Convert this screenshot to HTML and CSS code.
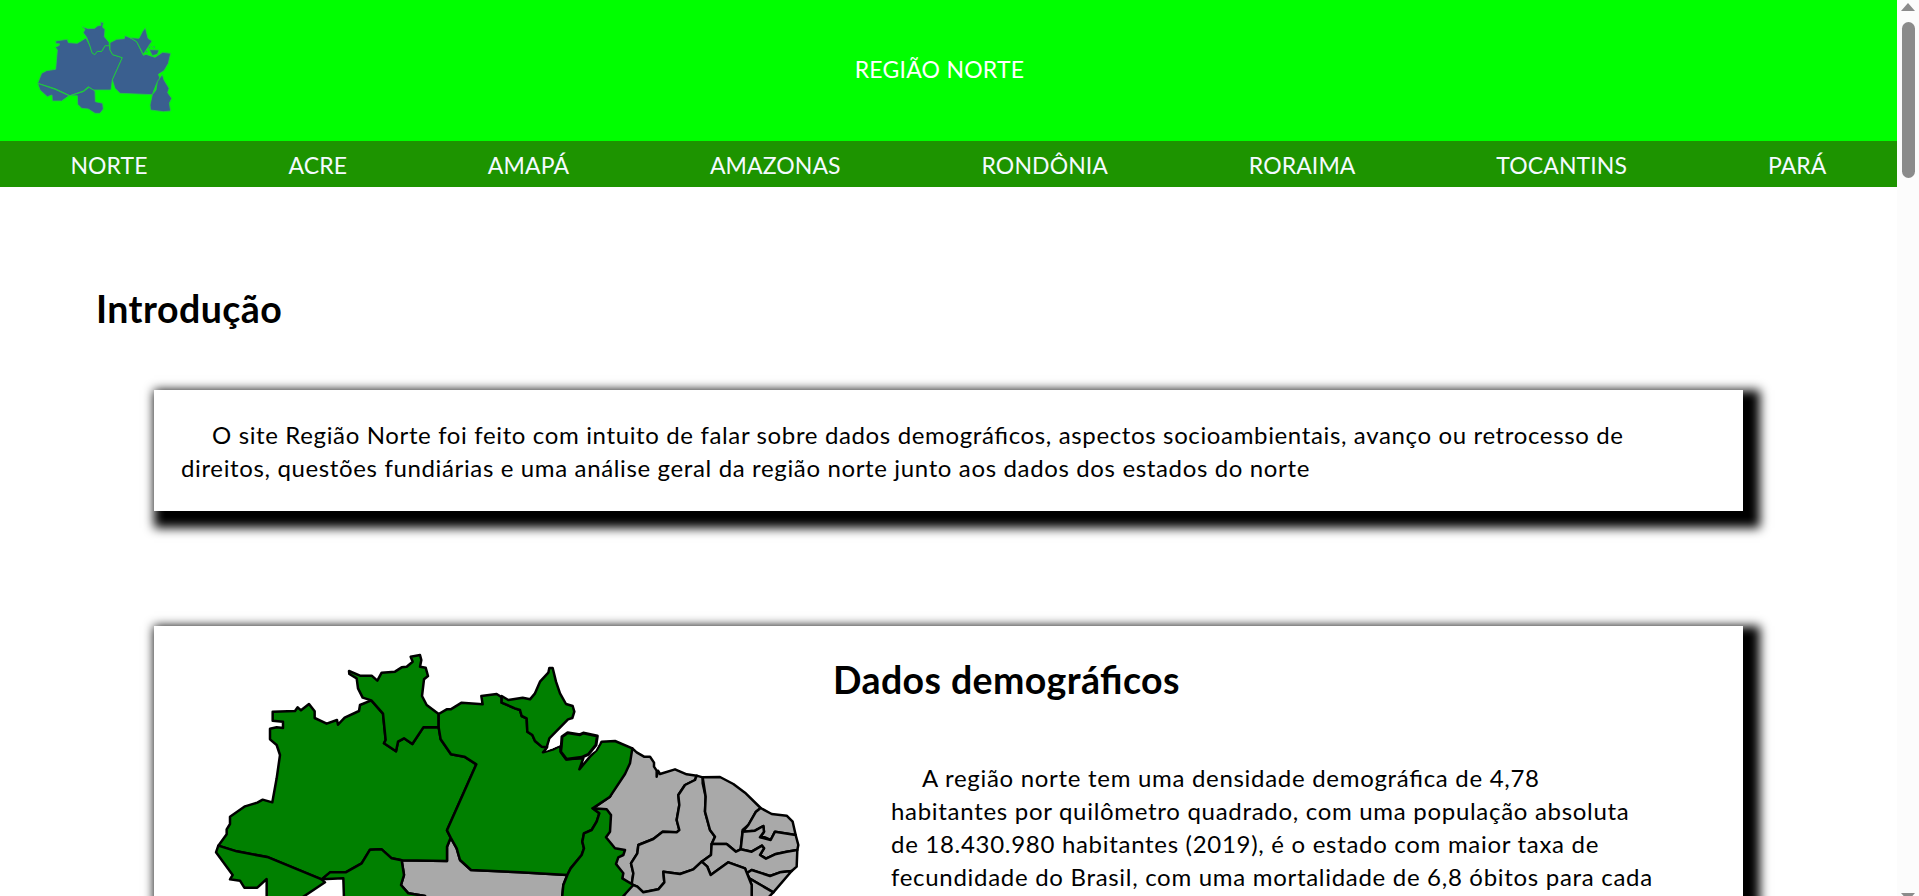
FILE: index.html
```html
<!DOCTYPE html>
<html lang="pt-BR">
<head>
<meta charset="utf-8">
<title>Região Norte</title>
<link rel="stylesheet" href="styles.css">
</head>
<body>
<div class="page">
  <header class="header">
    <svg class="logo" viewBox="0 0 510 360" aria-label="Mapa da Região Norte">
      <path d="M107 93 142 88 145 98 172 100 198 84 210 108 216 128 224 134 232 124 245 124 255 107 268 107 270 120 278 134 307 143 277 210 273 240 220 240 205 230 190 243 150 257 105 236 53 220 65 190 80 182 107 178 112 120 106 112 118 106 118 101 108 101Z"/>
      <path d="M200 82 190 68 195 58 186 50 205 56 225 55 232 48 243 46 242 36 250 38 248 52 255 58 253 80 267 97 268 107 255 107 245 124 232 124 224 134 216 128 210 108Z"/>
      <path d="M270 98 290 88 313 86 315 77 330 83 350 95 370 136 378 133 405 142 428 127 452 130 445 160 432 182 415 193 420 205 408 225 397 254 300 250 285 235 277 210 307 143 278 134 270 120Z"/>
      <path d="M330 83 357 85 368 64 376 53 384 85 396 93 370 133 350 95Z"/>
      <path d="M388 119 417 120 412 133 397 137Z"/>
      <path d="M384 113 391 109 389 116ZM397 110 404 109 404 115ZM375 125 383 122 382 129Z"/>
      <path d="M427 193 432 210 447 235 443 248 455 265 448 280 452 303 430 305 392 300 390 285 397 254 408 240 412 215Z"/>
      <path d="M53 220 105 238 147 257 125 273 97 273 96 255 82 260 60 240Z"/>
      <path d="M150 257 190 245 207 232 225 243 226 275 248 280 250 297 240 310 225 310 205 297 185 295 173 283 172 257Z"/>
    </svg>
    <p class="site-name">REGIÃO NORTE</p>
  </header>
  <nav class="nav">
    <a>NORTE</a><a>ACRE</a><a>AMAPÁ</a><a>AMAZONAS</a><a>RONDÔNIA</a><a>RORAIMA</a><a>TOCANTINS</a><a>PARÁ</a>
  </nav>
  <main class="main">
    <h1 class="title">Introdução</h1>
    <section class="card intro">
      <p class="text">O site Região Norte foi feito com intuito de falar sobre dados demográficos, aspectos socioambientais, avanço ou retrocesso de<br>direitos, questões fundiárias e uma análise geral da região norte junto aos dados dos estados do norte</p>
    </section>
    <section class="card data">
      <svg class="map" viewBox="0 0 1800 840" aria-label="Mapa do Brasil">
        <g class="other">
          <path d="M605 661 741 663 741 620 752 593 770 625 780 660 813 690 960 697 1102 705 1090 735 1080 840 700 840 675 768 625 760 603 735 612 705Z"/>
          <path d="M1297 325 1310 337 1332 350 1350 350 1362 368 1362 380 1370 392 1370 410 1374 392 1380 402 1425 388 1460 403 1490 407 1485 420 1455 435 1435 465 1438 495 1430 540 1438 570 1430 577 1388 575 1360 597 1315 615 1312 640 1293 670 1300 700 1295 733 1270 720 1248 672 1180 505 1230 470Z"/>
          <path d="M1490 407 1508 412 1508 430 1517 470 1515 515 1530 570 1545 590 1535 612 1533 645 1505 665 1480 688 1440 702 1390 695 1393 727 1375 748 1330 757 1312 740 1295 733 1300 700 1293 670 1312 640 1315 615 1360 597 1388 575 1430 577 1438 570 1430 540 1438 495 1435 465 1455 435 1485 420Z"/>
          <path d="M1508 412 1560 411 1600 432 1635 458 1682 504 1668 515 1645 555 1628 570 1622 628 1608 635 1580 612 1535 612 1545 590 1530 570 1515 515 1517 470Z"/>
          <path d="M1682 504 1715 522 1760 527 1778 545 1787 585 1725 575 1712 600 1695 592 1680 592 1692 575 1690 558 1665 572 1628 575 1645 555 1668 515Z"/>
          <path d="M1787 585 1795 615 1792 630 1760 635 1725 643 1698 656 1680 645 1692 625 1686 617 1655 635 1622 628 1628 575 1665 572 1690 558 1692 575 1680 592 1712 600 1725 575Z"/>
          <path d="M1792 630 1790 680 1775 693 1740 697 1710 708 1655 690 1640 700 1635 685 1585 667 1532 705 1522 680 1505 665 1533 645 1535 612 1580 612 1608 635 1622 628 1655 635 1686 617 1692 625 1680 645 1698 656 1725 643 1760 635Z"/>
          <path d="M1775 693 1720 757 1648 715 1640 700 1655 690 1710 708 1740 697Z"/>
          <path d="M1720 757 1640 840 1655 768 1655 735 1640 700 1648 715Z"/>
          <path d="M1295 733 1312 740 1330 757 1375 748 1393 727 1390 695 1440 702 1480 688 1505 665 1522 680 1532 705 1585 667 1635 685 1655 735 1655 768 1650 840 1220 840Z"/>
        </g>
        <g class="north">
          <path d="M218 215 285 213 293 202 303 211 327 192 344 214 344 234 380 251 411 240 414 254 434 233 477 213 480 195 514 181 549 221 557 300 552 310 588 334 594 305 612 295 637 312 670 262 716 262 722 298 753 343 793 350 829 373 741 571 752 593 741 620 741 663 605 661 575 655 545 628 510 629 485 670 437 697 390 697 365 718 205 652 110 634 55 617 80 583 80 568 90 552 90 530 135 499 172 488 188 479 217 487 230 415 240 345 230 315 210 298 210 266 230 262 249 264 249 245 218 242Z"/>
          <path d="M514 181 488 173 474 145 470 115 448 102 447 93 480 107 515 107 532 122 545 98 585 95 605 82 620 80 638 65 632 50 660 45 664 60 660 80 677 83 684 108 672 118 666 168 680 195 716 222 716 262 670 262 637 312 612 295 594 305 588 334 552 310 557 300 549 221Z"/>
          <path d="M716 222 740 208 752 208 785 188 848 193 844 168 890 162 905 172 905 188 945 205 960 210 965 228 980 235 982 275 997 285 1005 303 1025 320 1042 322 1029 337 1060 328 1080 318 1084 338 1098 358 1150 355 1138 388 1170 350 1190 330 1205 305 1245 303 1297 325 1290 370 1275 402 1230 470 1178 505 1198 520 1190 545 1175 570 1152 580 1147 605 1152 625 1145 645 1112 685 1102 705 960 697 813 690 780 660 770 625 752 593 741 571 829 373 793 350 753 343 722 298 716 262Z"/>
          <path d="M905 168 925 180 968 173 990 178 1005 160 1020 125 1045 98 1048 84 1058 84 1068 125 1080 160 1098 192 1118 198 1123 215 1117 234 1104 238 1048 295 1040 322 1025 320 1005 303 997 285 982 275 980 235 965 228 960 210 945 205 905 188Z"/>
          <path class="channel" d="M1046 322 1052 299 1082 280 1080 316 1038 333ZM1155 352 1190 312 1200 307 1186 332Z"/>
          <path class="island" d="M1086 290 1103 278 1140 284 1150 279 1192 288 1188 315 1165 343 1145 352 1100 358 1082 335 1084 318Z"/>
          <path d="M1178 505 1220 508 1233 525 1230 575 1218 592 1245 625 1275 630 1270 645 1255 652 1248 672 1270 700 1267 715 1300 735 1270 768 1230 840 1080 840 1090 735 1102 705 1112 685 1145 645 1152 625 1147 605 1152 580 1175 570 1190 545 1198 520Z"/>
          <path d="M55 617 48 637 98 705 90 718 120 722 133 743 172 743 200 717 200 810 250 810 375 727 365 718 205 652 110 634Z"/>
          <path d="M365 718 430 715 434 840 700 840 675 768 625 760 603 735 612 705 605 661 575 655 545 628 510 629 485 670 437 697 390 697Z"/>
        </g>
      </svg>
      <div class="article">
        <h2 class="subtitle">Dados demográficos</h2>
        <p class="text">A região norte tem uma densidade demográfica de 4,78<br>habitantes por quilômetro quadrado, com uma população absoluta<br>de 18.430.980 habitantes (2019), é o estado com maior taxa de<br>fecundidade do Brasil, com uma mortalidade de 6,8 óbitos para cada</p>
      </div>
    </section>
  </main>
</div>
<div class="scrollbar"><i class="arrow up"></i><i class="thumb"></i><i class="arrow down"></i></div>
</body>
</html>
```
FILE: styles.css
```css
* { box-sizing: border-box; margin: 0; padding: 0; }
body {
  display: flex;
  height: 896px;
  overflow: hidden;
  background: #fff;
  color: #000;
  font-family: Lato, sans-serif;
  font-feature-settings: "liga" 1;
}
.page { width: 1897px; height: 896px; overflow: hidden; }
.header {
  display: grid;
  grid-template-columns: 170px 1fr 188px;
  align-items: center;
  height: 141px;
  padding: 0 20px 1px;
  background: #00ff00;
}
.logo { width: 170px; height: 120px; fill: #3a5f8f; stroke: #1fd03a; stroke-width: 2.5; stroke-linejoin: round; }
.site-name { padding-bottom: 2px; text-align: center; color: #fff; font-size: 23px; letter-spacing: 0.25px; }
.nav {
  display: flex;
  justify-content: space-around;
  align-items: center;
  height: 46px;
  padding-top: 1px;
  background: #1d9400;
  color: #f4fbff;
  font-size: 23px;
  letter-spacing: 0.1px;
}
.main { padding: 0 154px; }
.title { margin: 100px 0 0 -58px; font-size: 37.5px; line-height: 44px; letter-spacing: 0.45px; }
.card { background: #fff; box-shadow: 8.5px 8.5px 10px 8.5px #000; }
.intro { height: 121px; margin-top: 59px; padding: 28px 27px 0; }
.text { font-size: 24px; line-height: 33px; letter-spacing: 0.64px; text-indent: 31px; white-space: nowrap; }
.data { display: flex; height: 500px; margin-top: 115px; padding: 14px 0 0 46px; }
.map { flex: none; width: 600px; height: 280px; }
.north, .other { stroke: #000; stroke-width: 7.5; stroke-linejoin: round; }
.north { fill: #008000; }
.other { fill: #a9a9a9; }
.channel { fill: #fff; stroke: none; }
.island { stroke-width: 9; }
.article { padding: 18px 0 0 33px; }
.subtitle { font-size: 37.5px; line-height: 44px; letter-spacing: 0.4px; }
.article .text { margin: 59px 0 0 58px; letter-spacing: 0.7px; }
.scrollbar {
  display: flex;
  flex-direction: column;
  align-items: center;
  width: 22px;
  height: 896px;
  padding: 3px 0 0;
  background: #fcfcfc;
}
.arrow { border: 7px solid transparent; border-top-width: 0; border-bottom-width: 0; }
.up { border-bottom: 8px solid #8b8b8b; }
.down { margin-top: auto; margin-bottom: -5px; border-top: 8px solid #8b8b8b; }
.thumb { width: 13px; height: 156px; margin-top: 11px; border-radius: 7px; background: #8b8b8b; }
```
